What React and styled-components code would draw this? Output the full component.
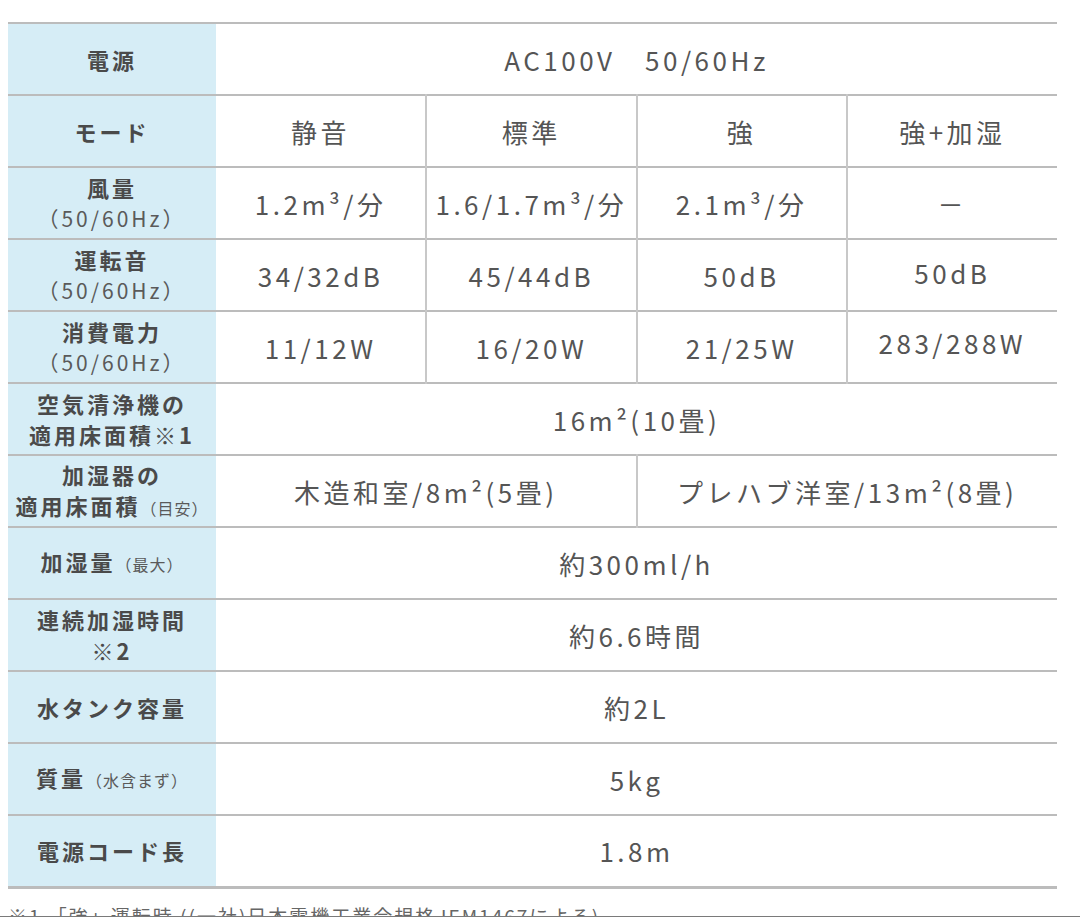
import React from "react";
import styled, { createGlobalStyle } from "styled-components";

const GlobalStyle = createGlobalStyle`
  html, body {
    margin: 0;
    padding: 0;
    background: #ffffff;
  }
  body {
    font-family: "Noto Sans CJK JP", "Noto Sans", sans-serif;
    color: #555555;
  }
`;

const Page = styled.div`
  width: 1080px;
  height: 917px;
  overflow: hidden;
  padding: 22px 23px 0 8px;
  box-sizing: border-box;
`;

const SpecTable = styled.table`
  width: 1049px;
  border-collapse: collapse;
  table-layout: fixed;
`;

const Row = styled.tr`
  height: 72px;
  border-top: 2px solid #bcbcbc;
  &:last-child {
    border-bottom: 3px solid #bcbcbc;
  }
`;

const Label = styled.th`
  width: 208px;
  padding: 0;
  background: #d6edf6;
  color: #4a4a4a;
  font-size: 22px;
  font-weight: 700;
  letter-spacing: 3px;
  line-height: 31px;
  text-align: center;
  vertical-align: middle;
`;

const Sub = styled.span`
  display: ${(p) => (p.$block ? "block" : "inline")};
  font-weight: 400;
  font-size: ${(p) => (p.$small ? "16px" : "21px")};
  letter-spacing: ${(p) => (p.$small ? "1px" : "3px")};
  color: #5a5a5a;
`;

const Cell = styled.td`
  padding: 0 0 ${(p) => p.$lift || 0}px;
  text-align: center;
  vertical-align: middle;
  font-size: 26px;
  letter-spacing: 3.5px;
  color: #555555;
  border-left: ${(p) => (p.$divider ? "2px solid #c8c8c8" : "none")};
`;

const Footnote = styled.div`
  height: 27px;
  overflow: hidden;
  border-bottom: 2px solid #7a7a7a;
  margin-left: -8px;
  margin-right: -23px;
  padding-left: 8px;
  box-sizing: content-box;
`;

const NoteText = styled.p`
  margin: 16px 0 0;
  font-size: 19px;
  line-height: 22px;
  color: #666666;
  letter-spacing: 2px;
  white-space: nowrap;
`;

const modes = ["静音", "標準", "強", "強+加湿"];

const perMode = [
  { label: "風量", values: ["1.2m³/分", "1.6/1.7m³/分", "2.1m³/分", "－"] },
  { label: "運転音", values: ["34/32dB", "45/44dB", "50dB", "50dB"], lift: [0, 0, 0, 6] },
  { label: "消費電力", values: ["11/12W", "16/20W", "21/25W", "283/288W"], lift: [0, 0, 0, 10] },
];

const single = [
  { label: <>加湿量<Sub $small>（最大）</Sub></>, value: "約300ml/h" },
  { label: <>連続加湿時間<br />※2</>, value: "約6.6時間" },
  { label: "水タンク容量", value: "約2L" },
  { label: <>質量<Sub $small>（水含まず）</Sub></>, value: "5kg" },
  { label: "電源コード長", value: "1.8m" },
];

export default function App() {
  return (
    <>
      <GlobalStyle />
      <Page>
        <SpecTable>
          <tbody>
            <Row>
              <Label>電源</Label>
              <Cell colSpan={4}>AC100V　50/60Hz</Cell>
            </Row>
            <Row>
              <Label>モード</Label>
              {modes.map((m, i) => (
                <Cell key={m} $divider={i > 0}>{m}</Cell>
              ))}
            </Row>
            {perMode.map((r) => (
              <Row key={r.label}>
                <Label>
                  {r.label}
                  <Sub $block>（50/60Hz）</Sub>
                </Label>
                {r.values.map((v, i) => (
                  <Cell key={i} $divider={i > 0} $lift={r.lift ? r.lift[i] : 0}>
                    {v}
                  </Cell>
                ))}
              </Row>
            ))}
            <Row>
              <Label>
                空気清浄機の
                <br />
                適用床面積※1
              </Label>
              <Cell colSpan={4}>16m²(10畳)</Cell>
            </Row>
            <Row>
              <Label>
                加湿器の
                <br />
                適用床面積<Sub $small>（目安）</Sub>
              </Label>
              <Cell colSpan={2}>木造和室/8m²(5畳)</Cell>
              <Cell colSpan={2} $divider>プレハブ洋室/13m²(8畳)</Cell>
            </Row>
            {single.map((r) => (
              <Row key={r.value}>
                <Label>{r.label}</Label>
                <Cell colSpan={4}>{r.value}</Cell>
              </Row>
            ))}
          </tbody>
        </SpecTable>
        <Footnote>
          <NoteText>※1 「強」運転時 ((一社)日本電機工業会規格JEM1467による)</NoteText>
        </Footnote>
      </Page>
    </>
  );
}
